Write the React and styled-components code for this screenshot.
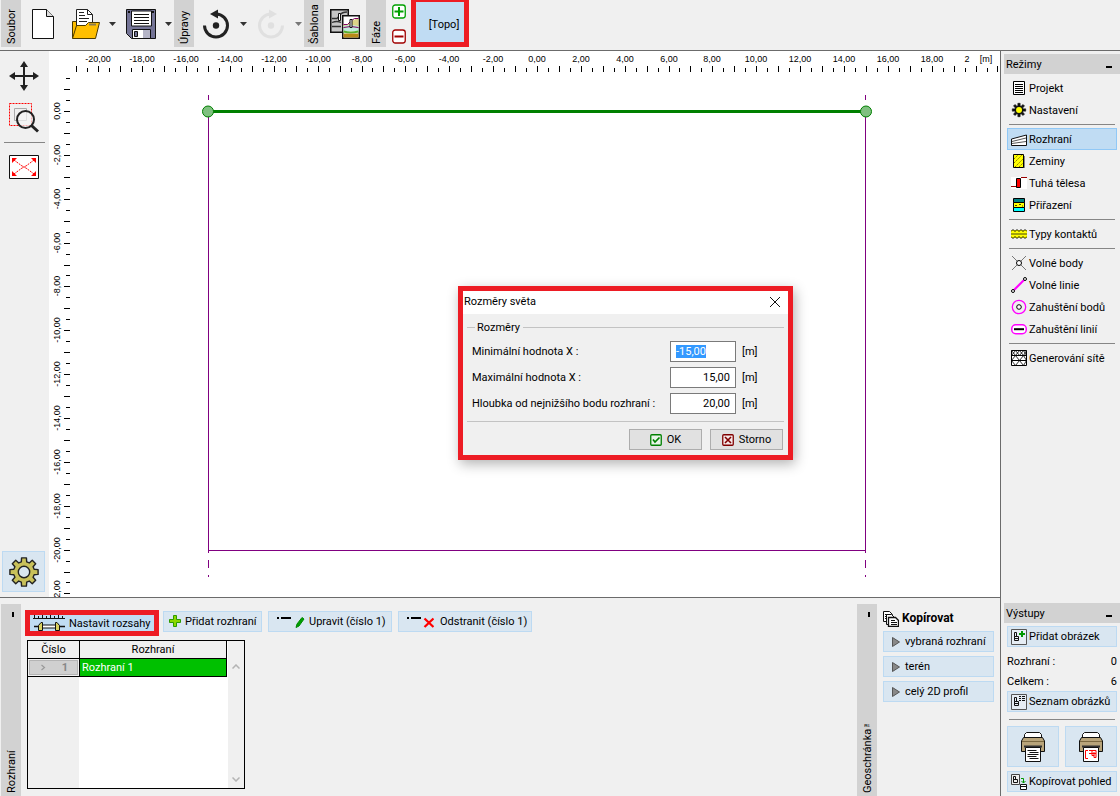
import React, { useEffect, useRef } from "react";
import styled, { createGlobalStyle, css } from "styled-components";

const GlobalStyle = createGlobalStyle`
  * { box-sizing: border-box; }
  body { margin: 0; background: #f0f0f0; }
  body, button, input, table { font-family: Roboto, "Liberation Sans", sans-serif; font-size: 11px; line-height: 15px; color: #000; }
  button { padding: 0; cursor: default; }
  svg { display: block; flex: none; }
`;

const LINE = "#6b6b6b";

/* ---------- layout ---------- */

const Window = styled.div`
  position: relative;
  display: grid;
  grid-template-rows: auto 1fr;
  min-height: 100vh;
  background: #f0f0f0;
  overflow: hidden;
`;

const Toolbar = styled.header`
  display: flex;
  height: 51px;
  padding-left: 1px;
  border-bottom: 1px solid ${LINE};
`;

const Body = styled.div`
  display: grid;
  grid-template-columns: minmax(0, 1fr) 120px;
`;

const Workspace = styled.main`
  display: grid;
  grid-template-rows: 1fr auto;
`;

const Stage = styled.section`
  display: grid;
  grid-template-columns: 49px minmax(0, 1fr);
  border-bottom: 1px solid ${LINE};
`;

const Sidebar = styled.aside`
  display: flex;
  flex-direction: column;
  padding: 3px 0 4px 3px;
  border-left: 1px solid ${LINE};
`;

/* ---------- toolbar ---------- */

const GroupTab = styled.div`
  display: flex;
  align-items: center;
  width: 20px;
  height: 47px;
  padding-top: 3px;
  background: #d2d2d2;
  writing-mode: vertical-rl;
  transform: rotate(180deg);
`;

const ToolButton = styled.button`
  display: grid;
  place-items: center;
  width: ${(p) => p.$w || 44}px;
  height: 48px;
  border: 0;
  background: none;
`;

const PhaseButtons = styled.div`
  display: flex;
  flex-direction: column;
  align-items: center;
  gap: 10px;
  width: 25px;
  padding-top: 4px;
`;

const SmallButton = styled.button`
  height: 15px;
  border: 0;
  background: none;
`;

const Marked = styled.div`
  display: flex;
  border: 5px solid #ed1c24;
`;

const PhaseButton = styled.button`
  width: 48px;
  padding: 4px 0 0 8px;
  border: 0;
  background: #c0dcf3;
`;

const PhaseFrame = styled(Marked)`
  align-self: start;
  height: 47px;
  border-top-width: 2px;
`;

/* ---------- tool strip ---------- */

const ToolStrip = styled.nav`
  display: flex;
  flex-direction: column;
  align-items: center;
  padding: 10px 2px 5px 0;
`;

const StripButton = styled.button`
  display: grid;
  place-items: center;
  width: 43px;
  height: ${(p) => p.$h || 30}px;
  margin-bottom: ${(p) => p.$gap || 0}px;
  border: 0;
  background: none;
`;

const SettingsButton = styled(StripButton)`
  height: 41px;
  margin-top: auto;
  border: 1px solid #bddaf2;
  background: #d9e6f1;
`;

const Rule = styled.hr`
  align-self: stretch;
  margin: ${(p) => p.$m || "3px"};
  border: 0;
  border-top: 1px solid #868686;
`;

/* ---------- buttons ---------- */

const PanelButton = styled.button`
  display: flex;
  align-items: center;
  height: 21px;
  padding: 0 5px;
  gap: 5px;
  border: 1px solid #bddaf2;
  background: #d9e6f1;
  white-space: nowrap;
  ${(p) =>
    p.$wide &&
    css`
      width: 100%;
    `}
`;

/* ---------- bottom panel ---------- */

const Bottom = styled.section`
  display: flex;
  height: 198px;
  padding: 6px 6px 0 1px;
`;

const SideTab = styled.div`
  display: flex;
  align-items: center;
  justify-content: space-between;
  width: 20px;
  padding: 3px 0 8px;
  background: #d2d2d2;
  writing-mode: vertical-rl;
  transform: rotate(180deg);

  &::after {
    content: "";
    width: 2px;
    height: 5px;
    margin-right: 5px;
    background: #000;
  }
`;

const TableArea = styled.div`
  flex: 1;
  padding: 6px 4px 7px;
`;

const ButtonRow = styled.div`
  display: flex;
  align-items: flex-start;
  gap: 6px;
  margin-bottom: 4px;
`;

const RangeFrame = styled(Marked)`
  width: 134px;
  height: 26px;
  margin-right: -2px;
`;

const RangeButton = styled(PanelButton)`
  flex: 1;
  height: 16px;
  padding: 0 3px;
  gap: 4px;
  border: 0;
  background: #c0dcf3;
`;

const ActionButton = styled(PanelButton)`
  height: 21px;
  margin-top: 1px;
  gap: ${(p) => p.$gap || 3}px;
  width: ${(p) => p.$w}px;
`;

const Grid = styled.div`
  display: flex;
  justify-content: space-between;
  width: 218px;
  height: 149px;
  margin-left: 2px;
  border: 1px solid #000;
  background: linear-gradient(to right, #f0f0f0 51px, #fff 51px);
`;

const DataTable = styled.table`
  align-self: flex-start;
  border-collapse: separate;
  border-spacing: 0;
  table-layout: fixed;
  width: 199px;

  th, td {
    height: 18px;
    border-right: 1px solid #000;
    border-bottom: 1px solid #000;
  }
  th {
    padding: 0;
    background: #f0f0f0;
    font-weight: 400;
  }
  td {
    padding: 0 2px;
    background: #00c000;
    color: #fff;
  }
  th:first-child { width: 52px; }
  td:first-child { padding: 1px; background: #f0f0f0; }
`;

const RowHandle = styled.span`
  display: flex;
  align-items: center;
  justify-content: space-between;
  height: 15px;
  padding: 0 9px 0 10px;
  border: 1px solid #b4b4b4;
  background: #d0d0d0;
  color: #888;
  font-weight: 700;
`;

const ScrollTrack = styled.div`
  display: flex;
  flex-direction: column;
  justify-content: space-between;
  align-items: center;
  width: 16px;
  padding: 23px 0 6px;
  background: #f0f0f0;
`;

const Clipboard = styled.div`
  display: flex;
  flex-direction: column;
  gap: 4px;
  width: 117px;
  padding: 6px 0 0 6px;
`;

const ClipboardTitle = styled.h2`
  display: flex;
  align-items: center;
  gap: 3px;
  height: 17px;
  margin: 0;
  font-size: 12px;
  line-height: 17px;
  font-weight: 700;
`;

const CopyButton = styled(PanelButton)`
  padding: 0 8px;
`;

/* ---------- sidebar ---------- */

const SidebarTitle = styled.h2`
  display: flex;
  align-items: center;
  justify-content: space-between;
  height: 20px;
  margin: 0 0 3px;
  padding: 0 8px 0 2px;
  background: #d2d2d2;
  font-size: 11px;
  font-weight: 400;

  &::after {
    content: "";
    width: 6px;
    height: 2px;
    margin-top: 6px;
    background: #000;
  }
`;

const SidebarGroup = styled.div`
  display: flex;
  flex-direction: column;
  padding: 0 3px;
`;

const ModeButton = styled.button`
  display: flex;
  align-items: center;
  gap: 2px;
  height: 22px;
  padding: 0 3px;
  border: 1px solid ${(p) => (p.$on ? "#90c8f6" : "transparent")};
  background: ${(p) => (p.$on ? "#c0dcf3" : "none")};
  white-space: nowrap;
`;

const Outputs = styled.div`
  margin-top: auto;
`;

const Counts = styled.div`
  padding: 4px 0 0;
`;

const Count = styled.div`
  display: flex;
  justify-content: space-between;
  height: 20px;
  padding: 3px 0 2px;
`;

const OutputButton = styled(PanelButton)`
  padding: 0 3px;
  gap: 2px;
`;

const PrintRow = styled.div`
  display: grid;
  grid-template-columns: 1fr 1fr;
  gap: 6px;
  margin-bottom: 4px;
`;

const PrintButton = styled(PanelButton)`
  justify-content: center;
  height: 41px;
`;

/* ---------- dialog ---------- */

const Dialog = styled.div`
  position: absolute;
  left: 458px;
  top: 286px;
  width: 335px;
  border: 5px solid #ed1c24;
  background: #f0f0f0;
  box-shadow: 2px 4px 12px rgba(0, 0, 0, 0.3);
`;

const DialogTitle = styled.div`
  display: flex;
  align-items: center;
  justify-content: space-between;
  height: 23px;
  padding: 0 8px 2px 1px;
  background: #fff;
`;

const CloseButton = styled.button`
  border: 0;
  background: none;
`;

const Dimensions = styled.fieldset`
  display: grid;
  gap: 5px;
  margin: 6px 4px 0;
  padding: 6px 5px 7px;
  border: 0;
  border-top: 1px solid #c3c3c3;
  border-bottom: 1px solid #c3c3c3;

  legend {
    margin-left: 3px;
    padding: 0 3px 0 2px;
  }
`;

const Field = styled.div`
  display: grid;
  grid-template-columns: 1fr 66px 37px;
  align-items: center;
  column-gap: 6px;
`;

const NumberInput = styled.input`
  width: 66px;
  height: 21px;
  padding: 0 5px;
  border: 1px solid #7a7a7a;
  border-radius: 0;
  outline: 0;
  background: #fff;
  text-align: ${(p) => (p.$left ? "left" : "right")};

  &::selection { background: #3399ff; color: #fff; }
`;

const DialogActions = styled.div`
  display: flex;
  justify-content: flex-end;
  gap: 8px;
  padding: 7px 5px 5px;
`;

const DialogButton = styled.button`
  display: flex;
  align-items: center;
  justify-content: center;
  gap: 5px;
  width: 73px;
  height: 21px;
  border: 1px solid #adadad;
  background: #e1e1e1;
`;

/* ---------- drawing area ---------- */

const Plot = styled.svg`
  width: 100%;
  height: 100%;
  min-height: 546px;
  background: #fff;
  font-family: "Liberation Sans", sans-serif;
  font-size: 9px;
`;

const UNIT = 21.93;
const px = (v) => Math.round(159 + (v + 15) * UNIT);
const py = (v) => Math.round(60 - v * UNIT);
const range = (a, b, step) =>
  Array.from({ length: Math.round((b - a) / step) + 1 }, (_, i) => a + i * step);
const label = (v) => v.toFixed(2).replace(".", ",");

function Drawing() {
  return (
    <Plot role="img" aria-label="2D profil">
      <g fill="#000" shapeRendering="crispEdges">
        {range(-21, 21, 0.5).map((v) => {
          const h = v % 1 === 0 ? 6 : 4;
          return <rect key={v} x={px(v)} y={21 - h} width="1" height={h} />;
        })}
        {range(-22, 1.5, 0.5).map((v) => {
          const w = v % 1 === 0 ? 6 : 4;
          return <rect key={v} x={21 - w} y={py(v)} width={w} height="1" />;
        })}
      </g>
      <g textAnchor="middle">
        {range(-20, 18, 2).map((v) => (
          <text key={v} x={px(v)} y="11">{label(v)}</text>
        ))}
        <text x="918" y="11">2</text>
        <text x="937" y="11">[m]</text>
        {range(-22, 0, 2).map((v) => (
          <text key={v} transform={`translate(11 ${py(v)}) rotate(-90)`}>{label(v)}</text>
        ))}
      </g>
      <g fill="#800080" shapeRendering="crispEdges">
        {[159, 816].map((x) => (
          <React.Fragment key={x}>
            <rect x={x} y="44" width="1" height="5" />
            <rect x={x} y="60" width="1" height="442" />
            <rect x={x} y="509" width="1" height="8" />
            <rect x={x} y="524" width="1" height="2" />
          </React.Fragment>
        ))}
        <rect x="159" y="499" width="658" height="1" />
      </g>
      <rect x="159" y="59" width="658" height="3" fill="#008000" />
      <g fill="#80c080" stroke="#008000">
        <circle cx="159" cy="60.5" r="5.5" />
        <circle cx="817" cy="60.5" r="5.5" />
      </g>
    </Plot>
  );
}

/* ---------- icons ---------- */

const Svg = ({ w = 16, h = w, children, ...rest }) => (
  <svg width={w} height={h} viewBox={`0 0 ${w} ${h}`} fill="none" aria-hidden="true" {...rest}>
    {children}
  </svg>
);

const ArrowDown = ({ color = "#333" }) => (
  <Svg w={7} h={4}><path d="M0 0h7L3.5 4z" fill={color} /></Svg>
);
const NewIcon = () => (
  <Svg w={22} h={30}>
    <path d="M.5.5h14l7 7v22H.5z" fill="#fff" stroke="#111" />
    <path d="M14.5.5v7h7" fill="#ddd" stroke="#111" />
  </Svg>
);
const OpenIcon = () => (
  <Svg w={28} h={30}>
    <path d="M.5 29V12.500h4V29z" fill="#ffbf00" stroke="#4a3a00" />
    <path d="M4.500 18V.5h11l5 5V16z" fill="#fff" stroke="#222" />
    <path d="M15.500.5v5h5M7 3.500h5M7 6.500h6M7 9.500h10M7 12.500h8" stroke="#222" />
    <path d="M.5 29.500l4-13h9l3-3h11l-4 16z" fill="#ffbf00" stroke="#4a3a00" />
    <path d="M17 15.500h7" stroke="#8a7a50" strokeWidth="2" />
  </Svg>
);
const SaveIcon = () => (
  <Svg w={30} h={30}>
    <path d="M.5.5h29v29h-24l-5-5z" fill="#747496" stroke="#111" />
    <path d="M5.500 2h20v15h-20z" fill="#fff" stroke="#111" />
    <path d="M8 5.500h15M8 8.500h15M8 11.500h15M8 14.500h15" stroke="#111" />
    <path d="M2 2h2v2H2zM26 2h2v2h-2z" fill="#111" />
    <path d="M6.500 20.500h18v9h-18z" fill="#fff" stroke="#111" />
    <path d="M17 21h7v8h-7z" fill="#b4b4c6" />
    <path d="M8.500 22.500h3v5h-3z" fill="#747496" stroke="#111" />
  </Svg>
);
const RotateIcon = ({ flip, color }) => (
  <Svg w={26} h={30}>
    <g transform={flip ? "matrix(-1 0 0 1 26 0)" : undefined}>
      <path d="M1.500 16.500A11.500 11.500 0 1 0 13 5" stroke={color} strokeWidth="3" />
      <path d="M15 .5v9L7 5z" fill={color} />
      <circle cx="13" cy="16.500" r="3.200" fill={color} />
    </g>
  </Svg>
);
const TemplateIcon = () => (
  <Svg w={30} h={30}>
    <path d="M.75.75h17.500v22.500H.75z" fill="#c6c6c6" stroke="#111" strokeWidth="1.500" />
    <path d="M2 9.500h5l3-3.500q2-3 7-3M2 13.500q5-2 9 0M2 17.500h9" stroke="#333" strokeWidth="1.300" />
    <path d="M8.500 4.500h2v7h-2z" fill="#fff" stroke="#111" />
    <path d="M12.750 6.750h16.500v22.500H12.750z" fill="#fff" stroke="#111" strokeWidth="1.500" />
    <path d="M13.500 15h6l4-4 5-2v9h-15z" fill="#dcd488" />
    <path d="M13.500 17q7-2 15 0v6q-7-2-15 0z" fill="#c0ecdc" />
    <path d="M13.500 15.500h4l4-4 3-2h4M13.500 18.500q7-2 15 0" stroke="#800060" />
    <path d="M13.500 22.500q7 2 15 0" stroke="#58b030" strokeWidth="2" />
    <path d="M13.500 24.500h15v4h-15z" fill="#b88a18" />
    <path d="M20 10.500h2v8h-2z" fill="#fff" stroke="#111" />
  </Svg>
);
const BoxedSign = ({ color, plus }) => (
  <Svg w={14} h={15}>
    <rect x=".75" y="1" width="12.500" height="13" rx="2.500" fill="#fff" stroke={color} strokeWidth="1.300" />
    <path d={plus ? "M2.500 7.500h9M7 3v9" : "M2.500 7.500h9"} stroke={color} strokeWidth="2" />
  </Svg>
);
const MoveIcon = () => (
  <Svg w={30} h={30}>
    <path d="M15 3v24M3 15h24" stroke="#222" strokeWidth="2" />
    <path d="M15 0l4 6h-8zM15 30l4-6h-8zM0 15l6-4v8zM30 15l-6-4v8z" fill="#222" />
  </Svg>
);
const ZoomIcon = () => (
  <Svg w={30} h={30}>
    <path d="M.5.5h22v22H.5z" stroke="#f00" strokeDasharray="2 1" />
    <path d="M5.500 5.500h12v12h-12z" stroke="#aaa" />
    <circle cx="16.500" cy="16.500" r="8.500" fill="#f4f4f4" fillOpacity=".7" stroke="#222" strokeWidth="2" />
    <path d="M22.500 22.500l6.500 6" stroke="#222" strokeWidth="3" />
  </Svg>
);
const FitIcon = () => (
  <Svg w={30} h={24}>
    <path d="M.5.5h29v23H.5z" fill="#fff" stroke="#111" />
    <path d="M5 5l8 6M25 5l-8 6M5 19l8-6M25 19l-8-6" stroke="#f00" strokeDasharray="2 1" />
    <path d="M13 10.500l1.500 1.500-1.500 1.500M17 10.500L15.500 12l1.500 1.500" stroke="#f00" />
    <path d="M3 3h5L3 8zM27 3h-5l5 5zM3 21h5l-5-5zM27 21h-5l5-5z" fill="#f00" />
  </Svg>
);
const gearPath = (c, outer, inner, teeth) => {
  const pts = [];
  for (let i = 0; i < teeth; i++) {
    const a = (i / teeth) * Math.PI * 2 - Math.PI / 2;
    [[-0.26, inner], [-0.17, outer], [0.17, outer], [0.26, inner]].forEach(([d, r]) =>
      pts.push(`${(c + r * Math.cos(a + d)).toFixed(2)} ${(c + r * Math.sin(a + d)).toFixed(2)}`)
    );
  }
  return `M${pts.join("L")}Z`;
};
const GearIcon = () => (
  <Svg w={30} h={30}>
    <path d={gearPath(15, 14.300, 10.500, 8)} fill="#c8c05a" stroke="#222" strokeWidth="1.400" strokeLinejoin="round" />
    <circle cx="15" cy="15" r="5.700" fill="#d9e6f1" stroke="#222" strokeWidth="1.400" />
  </Svg>
);
const RangeIcon = () => (
  <Svg w={32} h={16}>
    <path d="M0 3.500h32M1.500 0v3M5.500 1v2M9.500 0v3M13.500 1v2M17.500 0v3M21.500 1v2M25.500 0v3M29.500 1v2" stroke="#111" />
    <path d="M1 11.500h31" stroke="#111" strokeWidth="1.500" />
    <path d="M9 10h14v3H9z" fill="#fff" stroke="#111" />
    <path d="M5.500 15.500v-5l2.500-3h1.500v8zM26.500 15.500v-5l-2.500-3h-1.500v8z" fill="#d8d060" stroke="#111" />
  </Svg>
);
const PlusIcon = () => (
  <Svg w={13} h={13}>
    <path d="M4.500.5h3v4h4v3h-4v4h-3v-4h-4v-3h4z" fill="#8cd800" stroke="#2c9a00" />
  </Svg>
);
const EditIcon = () => (
  <Svg w={32} h={14}>
    <path d="M3 3h2M7 3h10" stroke="#000" strokeWidth="2" />
    <path d="M22 12.500l1-3.500 5-6.500 2 1.500-5 7z" fill="#00a000" stroke="#008800" />
  </Svg>
);
const RemoveIcon = () => (
  <Svg w={30} h={14}>
    <path d="M3 3h2M7 3h10" stroke="#000" strokeWidth="2" />
    <path d="M20.500 3.500l9 8.500M29.500 3.500l-9 8.500" stroke="#f00" strokeWidth="2.300" />
  </Svg>
);
const Chevron = ({ down }) => (
  <Svg w={8} h={5}>
    <path d={down ? "M.5.5L4 4 7.500.5" : "M.5 4.500L4 1l3.500 3.500"} stroke="#b4b4b4" strokeWidth="1.500" />
  </Svg>
);
const RowMark = () => (
  <Svg w={6} h={7}><path d="M1.500 1l3 2.500-3 2.500" stroke="#999" strokeWidth="1.200" /></Svg>
);
const CopyIcon = () => (
  <Svg w={16} h={16}>
    <path d="M.5.5h6l3 3v7h-9z" fill="#fff" stroke="#111" />
    <path d="M2 3.500h4M2 5.500h2M2 7.500h2" stroke="#111" />
    <path d="M3.500 3.500h5l3 3v7h-8z" fill="#fff" stroke="#111" />
    <path d="M5.500 6.500h7l3 3v6h-10z" fill="#fff" stroke="#111" strokeWidth="1.300" />
    <path d="M8 9.500h4M8 11.500h6M8 13.500h6" stroke="#111" />
  </Svg>
);
const PlayIcon = () => (
  <Svg w={8} h={10}><path d="M.5.5l7 4.500-7 4.500z" fill="#888" stroke="#555" /></Svg>
);
const CloseIcon = () => (
  <Svg w={10} h={10}><path d="M0 0l10 10M10 0L0 10" stroke="#111" /></Svg>
);
const OkIcon = () => (
  <Svg w={12} h={12}>
    <rect x=".75" y=".75" width="10.500" height="10.500" rx="1" fill="#e8f4e8" stroke="#008000" strokeWidth="1.300" />
    <path d="M3 5.500l2 2.500 4.500-4.500" stroke="#008000" strokeWidth="1.700" />
  </Svg>
);
const CancelIcon = () => (
  <Svg w={12} h={12}>
    <rect x=".75" y=".75" width="10.500" height="10.500" rx="1" fill="#f6e8e8" stroke="#800000" strokeWidth="1.300" />
    <path d="M3 3l6 6M9 3L3 9" stroke="#800000" strokeWidth="1.600" />
  </Svg>
);

const modeIcons = {
  project: (
    <Svg><path d="M2.500 1.500h11v13h-11z" fill="#fff" stroke="#000" /><path d="M4 4.500h8M4 6.500h8M4 8.500h8M4 10.500h8M4 12.500h8" stroke="#000" /></Svg>
  ),
  settings: (
    <Svg><path d={gearPath(8, 6.800, 4.300, 8)} fill="#111" stroke="#111" strokeWidth=".6" /><circle cx="8" cy="8" r="3" fill="#ff0" /></Svg>
  ),
  interfaces: (
    <Svg><path d="M.5 14.500V8L15.500 4v10.500z" fill="#fff" stroke="#111" /><path d="M1 10.500L15 7M1 12.500L15 10.500" stroke="#555" /></Svg>
  ),
  soils: (
    <Svg><path d="M4 3h10v12H4z" fill="#888" /><path d="M2.500 1.500h10v13h-10z" fill="#ff0" stroke="#000" /><path d="M3 6l4-4M3 10l8-8M4 14l8-8M8 14l4-4" stroke="#887700" strokeDasharray="2 1" /></Svg>
  ),
  rigid: (
    <Svg><path d="M0 2h16v12H0z" fill="#fff" /><path d="M0 11.500h5M10 2.500h6" stroke="#900" /><path d="M5.500 3.500h4v9h-4z" fill="#f00" stroke="#000" /></Svg>
  ),
  assign: (
    <Svg><path d="M2.500 1.500h11v4h-11z" fill="#008080" stroke="#000" /><path d="M2.500 5.500h11v5h-11z" fill="#ff0" stroke="#000" /><path d="M2.500 10.500h11v4h-11z" fill="#0ff" stroke="#000" /><path d="M4 8.500h2M8 7.500h2M11 9h1" stroke="#440" /></Svg>
  ),
  contacts: (
    <Svg><path d="M0 4h16v8H0z" fill="#ff0" /><path d="M0 5.500l2-2 2 2 2-2 2 2 2-2 2 2 2-2 2 2M0 10.500l2 2 2-2 2 2 2-2 2 2 2-2 2 2 2-2" stroke="#111" /><path d="M0 8h16" stroke="#111" strokeWidth=".8" /></Svg>
  ),
  points: (
    <Svg><path d="M1 1l14 14M15 1L1 15" stroke="#777" /><circle cx="8" cy="8" r="2.500" fill="#fff" stroke="#000" /></Svg>
  ),
  lines: (
    <Svg><path d="M3 13L13 3" stroke="#f0f" strokeWidth="2" /><circle cx="2" cy="14" r="1.500" fill="#fff" stroke="#000" /><circle cx="14" cy="2" r="1.500" fill="#fff" stroke="#000" /></Svg>
  ),
  densePoints: (
    <Svg><circle cx="8" cy="8" r="6.700" stroke="#f0f" strokeWidth="1.300" /><circle cx="8" cy="8" r="2.300" fill="#fff" stroke="#000" /></Svg>
  ),
  denseLines: (
    <Svg><rect x=".75" y="3.750" width="14.500" height="9" rx="4" fill="#fff" stroke="#f0f" strokeWidth="1.500" /><path d="M3 8.200h10" stroke="#000" strokeWidth="2" /></Svg>
  ),
  mesh: (
    <Svg><path d="M.5.5h15v15H.5z" fill="#fff" stroke="#000" /><path d="M0 5.500h16M0 10.500h16" stroke="#000" /><path d="M.5 5.500l4-5 4 5 4-5 3 5M.5.500l4 5 4-5 4 5 3-5M.5 10.500l4-5 4 5 4-5 3 5M.5 10.500l4 5 4-5 4 5 3-5" stroke="#000" strokeWidth=".8" /></Svg>
  ),
};

const PictureIcon = ({ kind }) => (
  <Svg>
    {kind === "copy" ? (
      <>
        <path d="M.5.5h8v10h-8z" fill="#eee" stroke="#444" />
        <path d="M2.500 2.500h2v3h-2zM2.500 5.500h4v3h-4z" stroke="#111" />
        <path d="M10 4.500h2.500V9M10.500 7l2 2 2-2" stroke="#090" />
        <path d="M9.500 10.500h6v5h-6zM9.500 12.500h6" fill="#fff" stroke="#111" />
      </>
    ) : (
      <>
        <path d="M.5.5h15v15H.5z" fill="#e6edf4" stroke="#555" />
        <path d="M3.500 3.500h2v4h-2zM3.500 7.500h4v4h-4zM3 9.500h5" stroke="#111" />
        {kind === "add" ? (
          <path d="M11 2v6M8 5h6" stroke="#090" strokeWidth="2" />
        ) : (
          <path d="M8 2.500h2M11 2.500h3M8 4.500h2M11 4.500h3M8 6.500h2M11 6.500h3" stroke="#111" />
        )}
      </>
    )}
  </Svg>
);

const PrinterIcon = ({ drawing }) => (
  <Svg w={26} h={30}>
    <path d="M4.500 8V2.500l2-2h13l2 2V8z" fill="#fff" stroke="#111" />
    <path d="M1.500 9l2-3.500h19l2 3.500v10.500h-4v-3h-15v3h-4z" fill="#b8a47a" stroke="#111" />
    <path d="M2 9.500h22" stroke="#7a6840" />
    <path d="M4 14.500h18" stroke="#333" strokeWidth="2" />
    <path d="M5.500 15.500h15v14h-15z" fill="#fff" stroke="#111" />
    {drawing ? (
      <path d="M10 18.500H7.500v8H10M11 18.500h7v7h-2v-2h-2v-2h-3M14 18.500v3h4M16 20v4" stroke="#f00" />
    ) : (
      <path d="M7.500 18.500h9M9.500 20.500h9M7.500 22.500h11M7.500 24.500h9M9.500 26.500h9" stroke="#111" />
    )}
  </Svg>
);

/* ---------- content ---------- */

const modes = [
  [["project", "Projekt"], ["settings", "Nastavení"]],
  [["interfaces", "Rozhraní"], ["soils", "Zeminy"], ["rigid", "Tuhá tělesa"], ["assign", "Přiřazení"]],
  [["contacts", "Typy kontaktů"]],
  [["points", "Volné body"], ["lines", "Volné linie"], ["densePoints", "Zahuštění bodů"], ["denseLines", "Zahuštění linií"]],
  [["mesh", "Generování sítě"]],
];

const fields = [
  ["min-x", "Minimální hodnota X :", "-15,00"],
  ["max-x", "Maximální hodnota X :", "15,00"],
  ["depth", "Hloubka od nejnižšího bodu rozhraní :", "20,00"],
];

function WorldDialog() {
  const first = useRef(null);
  useEffect(() => {
    first.current.focus();
    first.current.select();
  }, []);

  return (
    <Dialog role="dialog" aria-labelledby="world-title">
      <DialogTitle>
        <span id="world-title">Rozměry světa</span>
        <CloseButton aria-label="Zavřít"><CloseIcon /></CloseButton>
      </DialogTitle>
      <Dimensions>
        <legend>Rozměry</legend>
        {fields.map(([id, text, value], i) => (
          <Field key={id}>
            <label htmlFor={id}>{text}</label>
            <NumberInput id={id} defaultValue={value} $left={i === 0} ref={i === 0 ? first : null} />
            <span>[m]</span>
          </Field>
        ))}
      </Dimensions>
      <DialogActions>
        <DialogButton><OkIcon />OK</DialogButton>
        <DialogButton><CancelIcon />Storno</DialogButton>
      </DialogActions>
    </Dialog>
  );
}

export default function App() {
  return (
    <Window>
      <GlobalStyle />
      <Toolbar>
        <GroupTab>Soubor</GroupTab>
        <ToolButton aria-label="Nový"><NewIcon /></ToolButton>
        <ToolButton $w={42} aria-label="Otevřít"><OpenIcon /></ToolButton>
        <ToolButton $w={11} aria-label="Poslední soubory"><ArrowDown /></ToolButton>
        <ToolButton $w={45} aria-label="Uložit"><SaveIcon /></ToolButton>
        <ToolButton $w={11} aria-label="Možnosti uložení"><ArrowDown /></ToolButton>
        <GroupTab>Úpravy</GroupTab>
        <ToolButton aria-label="Zpět"><RotateIcon color="#222" /></ToolButton>
        <ToolButton $w={11} aria-label="Historie"><ArrowDown /></ToolButton>
        <ToolButton aria-label="Vpřed"><RotateIcon color="#e0e0e0" flip /></ToolButton>
        <ToolButton $w={11} aria-label="Historie vpřed"><ArrowDown color="#777" /></ToolButton>
        <GroupTab>Šablona</GroupTab>
        <ToolButton $w={42} aria-label="Šablona"><TemplateIcon /></ToolButton>
        <GroupTab>Fáze</GroupTab>
        <PhaseButtons>
          <SmallButton aria-label="Přidat fázi"><BoxedSign color="#00a000" plus /></SmallButton>
          <SmallButton aria-label="Odebrat fázi"><BoxedSign color="#a00000" /></SmallButton>
        </PhaseButtons>
        <PhaseFrame><PhaseButton>[Topo]</PhaseButton></PhaseFrame>
      </Toolbar>

      <Body>
        <Workspace>
          <Stage>
            <ToolStrip>
              <StripButton $gap={12} aria-label="Posun"><MoveIcon /></StripButton>
              <StripButton $gap={6} aria-label="Lupa"><ZoomIcon /></StripButton>
              <Rule $m="3px 2px 12px 4px" />
              <StripButton $h={24} aria-label="Přizpůsobit"><FitIcon /></StripButton>
              <SettingsButton aria-label="Nastavení kreslení"><GearIcon /></SettingsButton>
            </ToolStrip>
            <Drawing />
          </Stage>

          <Bottom>
            <SideTab>Rozhraní</SideTab>
            <TableArea>
              <ButtonRow>
                <RangeFrame><RangeButton><RangeIcon />Nastavit rozsahy</RangeButton></RangeFrame>
                <ActionButton $w={99}><PlusIcon />Přidat rozhraní</ActionButton>
                <ActionButton $w={124}><EditIcon />Upravit (číslo 1)</ActionButton>
                <ActionButton $w={134} $gap={6}><RemoveIcon />Odstranit (číslo 1)</ActionButton>
              </ButtonRow>
              <Grid>
                <DataTable>
                  <thead><tr><th>Číslo</th><th>Rozhraní</th></tr></thead>
                  <tbody><tr><td><RowHandle><RowMark />1</RowHandle></td><td>Rozhraní 1</td></tr></tbody>
                </DataTable>
                <ScrollTrack><Chevron /><Chevron down /></ScrollTrack>
              </Grid>
            </TableArea>
            <SideTab>Geoschránka™</SideTab>
            <Clipboard>
              <ClipboardTitle><CopyIcon />Kopírovat</ClipboardTitle>
              {["vybraná rozhraní", "terén", "celý 2D profil"].map((t) => (
                <CopyButton key={t} $wide><PlayIcon />{t}</CopyButton>
              ))}
            </Clipboard>
          </Bottom>
        </Workspace>

        <Sidebar>
          <SidebarTitle>Režimy</SidebarTitle>
          <SidebarGroup>
            {modes.map((group, i) => (
              <React.Fragment key={i}>
                {i > 0 && <Rule $m="3px 2px" />}
                {group.map(([id, text]) => (
                  <ModeButton key={id} $on={id === "interfaces"}>{modeIcons[id]}{text}</ModeButton>
                ))}
              </React.Fragment>
            ))}
          </SidebarGroup>

          <Outputs>
            <SidebarTitle>Výstupy</SidebarTitle>
            <SidebarGroup>
              <OutputButton><PictureIcon kind="add" />Přidat obrázek</OutputButton>
              <Counts>
                <Count><span>Rozhraní :</span><span>0</span></Count>
                <Count><span>Celkem :</span><span>6</span></Count>
              </Counts>
              <OutputButton><PictureIcon kind="list" />Seznam obrázků</OutputButton>
              <Rule $m="7px 2px 6px" />
              <PrintRow>
                <PrintButton aria-label="Tisk protokolu"><PrinterIcon /></PrintButton>
                <PrintButton aria-label="Tisk obrázku"><PrinterIcon drawing /></PrintButton>
              </PrintRow>
              <OutputButton><PictureIcon kind="copy" />Kopírovat pohled</OutputButton>
            </SidebarGroup>
          </Outputs>
        </Sidebar>
      </Body>

      <WorldDialog />
    </Window>
  );
}
